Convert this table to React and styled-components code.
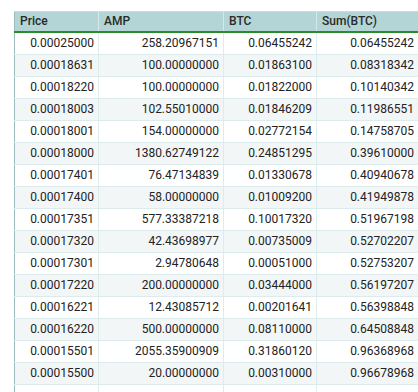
import styled, { createGlobalStyle } from "styled-components";

const GlobalStyle = createGlobalStyle`
  html, body {
    margin: 0;
    padding: 0;
    background: #fff;
    overflow: hidden;
  }
`;

const Page = styled.div`
  width: 418px;
  height: 392px;
  overflow: hidden;
  padding: 11px 0 0 14px;
  box-sizing: border-box;
  font-family: Roboto, "Liberation Sans", Arial, sans-serif;
  font-size: 12px;
  color: #222;
`;

const Table = styled.table`
  border-collapse: collapse;
  table-layout: fixed;
  width: 404px;
  border-left: 1px solid #9dbcbc;
  border-top: 1px solid #c9dede;
`;

const HeadCell = styled.th`
  height: 20px;
  padding: 0 5px;
  background: #b3d5d5;
  text-align: left;
  font-weight: 500;
  color: #2a2a2a;
  border-right: 1px solid #d6e8e8;
  border-bottom: 2px solid #2b8a2b;
  box-sizing: border-box;
`;

const Row = styled.tr`
  background: ${(p) => (p.$alt ? "#f2f6f7" : "#ffffff")};
`;

const Cell = styled.td`
  height: 21px;
  padding: 0 4px;
  text-align: right;
  border-right: 1px solid #dcebeb;
  border-bottom: 1px solid #dcebeb;
  white-space: nowrap;
  overflow: hidden;
`;

const cols = [
  { name: "Price", w: 84 },
  { name: "AMP", w: 125 },
  { name: "BTC", w: 93 },
  { name: "Sum(BTC)", w: 102 },
];

const rows = [
  ["0.00025000", "258.20967151", "0.06455242", "0.06455242"],
  ["0.00018631", "100.00000000", "0.01863100", "0.08318342"],
  ["0.00018220", "100.00000000", "0.01822000", "0.10140342"],
  ["0.00018003", "102.55010000", "0.01846209", "0.11986551"],
  ["0.00018001", "154.00000000", "0.02772154", "0.14758705"],
  ["0.00018000", "1380.62749122", "0.24851295", "0.39610000"],
  ["0.00017401", "76.47134839", "0.01330678", "0.40940678"],
  ["0.00017400", "58.00000000", "0.01009200", "0.41949878"],
  ["0.00017351", "577.33387218", "0.10017320", "0.51967198"],
  ["0.00017320", "42.43698977", "0.00735009", "0.52702207"],
  ["0.00017301", "2.94780648", "0.00051000", "0.52753207"],
  ["0.00017220", "200.00000000", "0.03444000", "0.56197207"],
  ["0.00016221", "12.43085712", "0.00201641", "0.56398848"],
  ["0.00016220", "500.00000000", "0.08110000", "0.64508848"],
  ["0.00015501", "2055.35900909", "0.31860120", "0.96368968"],
  ["0.00015500", "20.00000000", "0.00310000", "0.96678968"],
  ["", "", "", ""],
];

export default function App() {
  return (
    <>
      <GlobalStyle />
      <Page>
        <Table>
          <colgroup>
            {cols.map((c) => (
              <col key={c.name} style={{ width: c.w }} />
            ))}
          </colgroup>
          <thead>
            <tr>
              {cols.map((c) => (
                <HeadCell key={c.name}>{c.name}</HeadCell>
              ))}
            </tr>
          </thead>
          <tbody>
            {rows.map((r, i) => (
              <Row key={i} $alt={i % 2 === 1}>
                {r.map((v, j) => (
                  <Cell key={j}>{v}</Cell>
                ))}
              </Row>
            ))}
          </tbody>
        </Table>
      </Page>
    </>
  );
}
